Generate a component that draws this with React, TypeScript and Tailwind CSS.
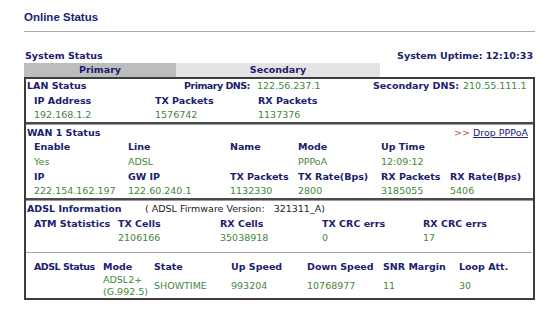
const navy = "text-[#20206e]";
const green = "text-[#3f873a]";

function L({ children, tight }: { children?: React.ReactNode; tight?: boolean }) {
  return (
    <span className={`font-bold ${navy} whitespace-nowrap ${tight ? "tracking-[-0.5px]" : ""}`}>
      {children}
    </span>
  );
}

function V({ children }: { children?: React.ReactNode }) {
  return <span className={`${green} whitespace-nowrap`}>{children}</span>;
}

export default function App() {
  return (
    <div className="w-[560px] h-[326px] bg-white font-['DejaVu_Sans',sans-serif] text-[9.5px] leading-none">
      <div className="ml-[24px] w-[511px] pt-[11px]">
        <div className="h-[14px] flex items-center font-['Liberation_Sans',Arial,sans-serif] font-bold text-[11.5px] text-[#1a2470]">
          Online Status
        </div>
        <div className="mt-[6px] h-px bg-[#ababab]" />

        <div className="mt-[17px] h-[14px] flex items-center justify-between pl-[1px] pr-[2px]">
          <L>System Status</L>
          <L>System Uptime: 12:10:33</L>
        </div>

        <div className="flex h-[14px]">
          <div className="w-[152px] bg-[#bdbdbd] flex items-center justify-center">
            <L>Primary</L>
          </div>
          <div className="w-[204px] bg-[#e3e3e3] flex items-center justify-center">
            <L>Secondary</L>
          </div>
        </div>

        <div className="border-2 border-[#3c3c3c]">
          {/* LAN */}
          <div className="h-[14.4px] flex items-center pl-[1px]">
            <span className="w-[157px]"><L>LAN Status</L></span>
            <span className="w-[73px]"><L tight>Primary DNS:</L></span>
            <span className="w-[116px]"><V>122.56.237.1</V></span>
            <span className="w-[90px]"><L>Secondary DNS:</L></span>
            <V>210.55.111.1</V>
          </div>
          <div className="h-[14.4px] grid grid-cols-[121px_103px_1fr] items-center pl-[8px]">
            <L>IP Address</L>
            <L>TX Packets</L>
            <L>RX Packets</L>
          </div>
          <div className="h-[14.4px] grid grid-cols-[121px_103px_1fr] items-center pl-[8px]">
            <V>192.168.1.2</V>
            <V>1576742</V>
            <V>1137376</V>
          </div>
          <div className="border-t-2 border-b border-t-[#4a4a4a] border-b-[#9a9a9a]" />

          {/* WAN */}
          <div className="h-[14.6px] flex items-center justify-between pl-[1px] pr-[5px]">
            <L>WAN 1 Status</L>
            <span className="whitespace-nowrap">
              <span className="text-[#d23c3c]">&gt;&gt; </span>
              <a className={`${navy} underline`} href="#">Drop PPPoA</a>
            </span>
          </div>
          <div className="h-[14.6px] grid grid-cols-[94px_102px_68px_83px_69px_1fr] items-center pl-[8px]">
            <L>Enable</L>
            <L>Line</L>
            <L>Name</L>
            <L>Mode</L>
            <L>Up Time</L>
            <span />
          </div>
          <div className="h-[14.6px] grid grid-cols-[94px_102px_68px_83px_69px_1fr] items-center pl-[8px]">
            <V>Yes</V>
            <V>ADSL</V>
            <V></V>
            <V>PPPoA</V>
            <V>12:09:12</V>
            <span />
          </div>
          <div className="h-[14.6px] grid grid-cols-[94px_102px_68px_83px_69px_1fr] items-center pl-[8px]">
            <L>IP</L>
            <L>GW IP</L>
            <L>TX Packets</L>
            <L>TX Rate(Bps)</L>
            <L>RX Packets</L>
            <L>RX Rate(Bps)</L>
          </div>
          <div className="h-[14.6px] grid grid-cols-[94px_102px_68px_83px_69px_1fr] items-center pl-[8px]">
            <V>222.154.162.197</V>
            <V>122.60.240.1</V>
            <V>1132330</V>
            <V>2800</V>
            <V>3185055</V>
            <V>5406</V>
          </div>
          <div className="border-t-2 border-b border-t-[#4a4a4a] border-b-[#9a9a9a]" />

          {/* ADSL */}
          <div className="h-[15px] flex items-center pl-[1px]">
            <span className="w-[118px]"><L>ADSL Information</L></span>
            <span className="text-[#222] whitespace-pre">( ADSL Firmware Version:   321311_A)</span>
          </div>
          <div className="h-[14.5px] grid grid-cols-[84px_102px_102px_101px_1fr] items-center pl-[8px]">
            <L>ATM Statistics</L>
            <L>TX Cells</L>
            <L>RX Cells</L>
            <L>TX CRC errs</L>
            <L>RX CRC errs</L>
          </div>
          <div className="h-[14.5px] grid grid-cols-[84px_102px_102px_101px_1fr] items-center pl-[8px]">
            <span />
            <V>2106166</V>
            <V>35038918</V>
            <V>0</V>
            <V>17</V>
          </div>
          <div className="mt-[6.5px] mr-[1px] h-px bg-[#a8a8a8]" />
          <div className="mt-[7.5px] h-[14px] grid grid-cols-[69px_51px_77px_76px_76px_76px_1fr] items-center pl-[8px]">
            <L tight>ADSL Status</L>
            <L>Mode</L>
            <L>State</L>
            <L>Up Speed</L>
            <L>Down Speed</L>
            <L>SNR Margin</L>
            <L>Loop Att.</L>
          </div>
          <div className="h-[24px] grid grid-cols-[69px_51px_77px_76px_76px_76px_1fr] items-center pl-[8px]">
            <span />
            <span className={`${green} leading-[12px] whitespace-nowrap`}>
              ADSL2+
              <br />
              (G.992.5)
            </span>
            <V>SHOWTIME</V>
            <V>993204</V>
            <V>10768977</V>
            <V>11</V>
            <V>30</V>
          </div>
        </div>
      </div>
    </div>
  );
}
